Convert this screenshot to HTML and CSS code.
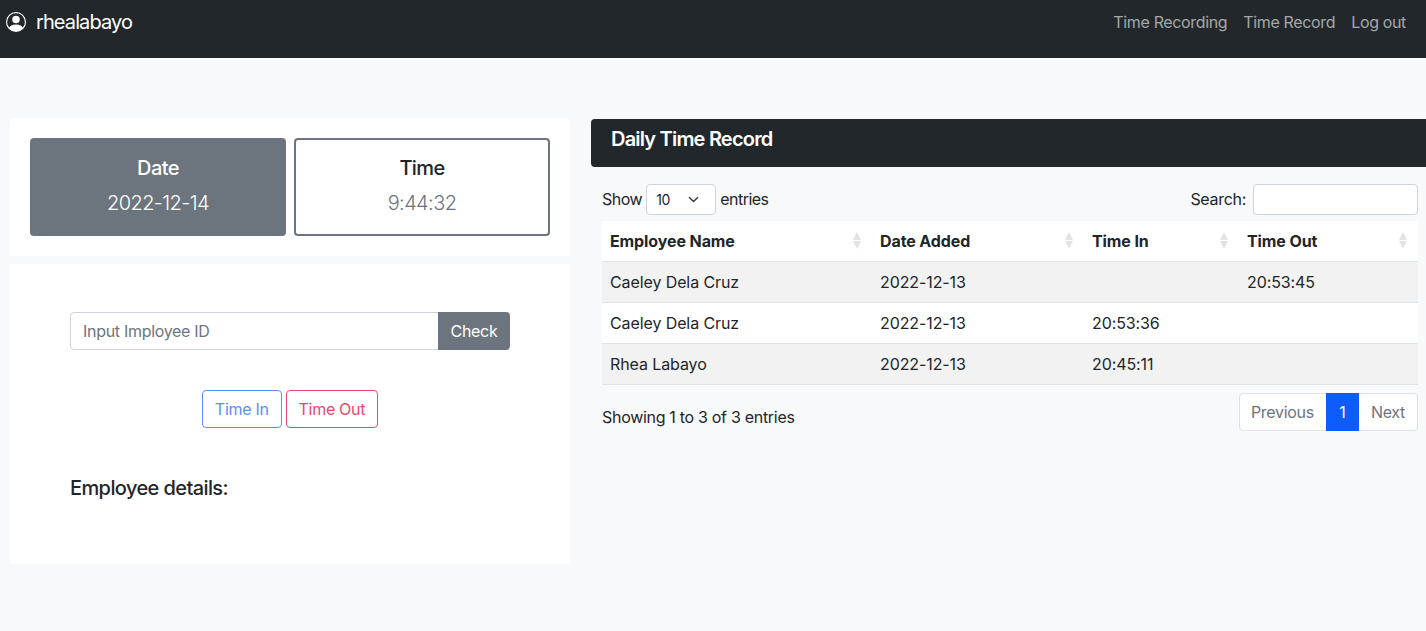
FILE: index.html
```html
<!DOCTYPE html>
<html lang="en">
<head>
  <meta charset="UTF-8">
  <meta name="viewport" content="width=device-width, initial-scale=1.0">
  <title>Daily Time Record</title>
  <link rel="stylesheet" href="styles.css">
</head>
<body>
  <nav class="navbar">
    <a class="brand" href="#">
      <svg class="brand-icon" viewBox="0 0 16 16" fill="currentColor">
        <path d="M11 6a3 3 0 1 1-6 0 3 3 0 0 1 6 0z"/>
        <path fill-rule="evenodd" d="M0 8a8 8 0 1 1 16 0A8 8 0 0 1 0 8zm8-7a7 7 0 0 0-5.468 11.37C3.242 11.226 4.805 10 8 10s4.757 1.225 5.468 2.37A7 7 0 0 0 8 1z"/>
      </svg>
      rhealabayo
    </a>
    <div class="nav-links">
      <a href="#">Time Recording</a>
      <a href="#">Time Record</a>
      <a href="#">Log out</a>
    </div>
  </nav>

  <main class="content">
    <section class="left-col">
      <div class="panel clock-panel">
        <div class="clock-box clock-date">
          <h5>Date</h5>
          <p>2022-12-14</p>
        </div>
        <div class="clock-box clock-time">
          <h5>Time</h5>
          <p>9:44:32</p>
        </div>
      </div>

      <div class="panel check-panel">
        <div class="input-group">
          <input class="id-input" type="text" placeholder="Input Imployee ID">
          <button class="btn-check">Check</button>
        </div>
        <div class="time-buttons">
          <button class="btn-outline btn-in">Time In</button>
          <button class="btn-outline btn-out">Time Out</button>
        </div>
        <h5 class="details-title">Employee details:</h5>
      </div>
    </section>

    <section class="right-col">
      <div class="record-header">Daily Time Record</div>
      <div class="record-body">
        <div class="table-tools">
          <label class="length-label">
            Show
            <span class="fake-select">10
              <svg class="chevron" viewBox="0 0 16 16"><path d="M2 5l6 6 6-6" fill="none" stroke="#343a40" stroke-width="2" stroke-linecap="round" stroke-linejoin="round"/></svg>
            </span>
            entries
          </label>
          <label class="search-label">Search: <input class="search-input" type="text"></label>
        </div>

        <table class="record-table">
          <colgroup>
            <col class="col-name">
            <col class="col-date">
            <col class="col-in">
            <col class="col-out">
          </colgroup>
          <thead>
            <tr>
              <th>Employee Name</th>
              <th>Date Added</th>
              <th>Time In</th>
              <th>Time Out</th>
            </tr>
          </thead>
          <tbody>
            <tr class="odd">
              <td>Caeley Dela Cruz</td>
              <td>2022-12-13</td>
              <td></td>
              <td>20:53:45</td>
            </tr>
            <tr>
              <td>Caeley Dela Cruz</td>
              <td>2022-12-13</td>
              <td>20:53:36</td>
              <td></td>
            </tr>
            <tr class="odd">
              <td>Rhea Labayo</td>
              <td>2022-12-13</td>
              <td>20:45:11</td>
              <td></td>
            </tr>
          </tbody>
        </table>

        <div class="table-foot">
          <span class="table-info">Showing 1 to 3 of 3 entries</span>
          <ul class="pagination">
            <li>Previous</li>
            <li class="active">1</li>
            <li>Next</li>
          </ul>
        </div>
      </div>
    </section>
  </main>
</body>
</html>
```

FILE: styles.css
```css
* {
  box-sizing: border-box;
}

body {
  margin: 0;
  background: #f8f9fa;
  color: #212529;
  font-family: Inter, "Liberation Sans", sans-serif;
  font-size: 16px;
  line-height: 24px;
  letter-spacing: -.3px;
}

h5 {
  margin: 0;
  font-size: 20px;
  font-weight: 500;
  line-height: 24px;
  letter-spacing: -.6px;
}

p {
  margin: 0;
}

a {
  text-decoration: none;
}

.navbar {
  display: flex;
  justify-content: space-between;
  height: 58px;
  padding: 7px 20px 0 6px;
  background: #21272b;
}

.brand {
  display: flex;
  align-items: center;
  gap: 10px;
  height: 30px;
  color: #fff;
  font-size: 20px;
  letter-spacing: -.9px;
}

.brand-icon {
  width: 20px;
  height: 20px;
}

.nav-links {
  display: flex;
  gap: 16px;
  height: 30px;
  align-items: center;
  letter-spacing: -.35px;
}

.nav-links a {
  color: rgba(255, 255, 255, .6);
}

.content {
  display: flex;
  gap: 21px;
  padding: 60px 0 0 10px;
}

.left-col {
  display: flex;
  flex-direction: column;
  gap: 8px;
  flex: none;
  width: 560px;
}

.panel {
  background: #fff;
  border-radius: 4px 4px 0 0;
}

.clock-panel {
  display: flex;
  gap: 8px;
  height: 138px;
  padding: 20px;
}

.clock-box {
  flex: 1;
  padding-top: 16px;
  border: 2px solid #6c757d;
  border-radius: 4px;
  text-align: center;
}

.clock-box p {
  margin-top: 11px;
  font-size: 20px;
  font-weight: 300;
  letter-spacing: -.6px;
}

.clock-date {
  background: #6c757d;
  color: #fff;
}

.clock-time p {
  color: #6c757d;
}

.check-panel {
  height: 300px;
  padding: 48px 60px 0;
  border-radius: 0;
}

.input-group {
  display: flex;
  height: 38px;
}

.id-input {
  flex: 1;
  min-width: 0;
  padding: 6px 12px;
  border: 1px solid #ced4da;
  border-radius: 4px 0 0 4px;
  font: inherit;
  letter-spacing: inherit;
}

.id-input::placeholder {
  color: #6c757d;
}

.btn-check {
  width: 72px;
  margin-left: -1px;
  border: 0;
  border-radius: 0 4px 4px 0;
  background: #6c757d;
  color: #fff;
  font: inherit;
  letter-spacing: inherit;
}

.time-buttons {
  display: flex;
  justify-content: center;
  gap: 4px;
  margin-top: 40px;
}

.btn-outline {
  height: 38px;
  padding: 0 12px;
  border: 1px solid;
  border-radius: 4px;
  background: #fff;
  font: inherit;
  letter-spacing: inherit;
}

.btn-in {
  border-color: #5c8ffc;
  color: #5c8ffc;
}

.btn-out {
  border-color: #e9486d;
  color: #e9486d;
}

.details-title {
  margin-top: 48px;
}

.right-col {
  flex: 1;
  min-width: 0;
  padding-top: 1px;
}

.record-header {
  height: 48px;
  padding: 8px 20px;
  border-radius: 4px 0 0 4px;
  background: #21272b;
  color: #fff;
  font-size: 20px;
  font-weight: 600;
  letter-spacing: -.8px;
}

.record-body {
  padding: 17px 8px 0 11px;
}

.table-tools {
  display: flex;
  justify-content: space-between;
  align-items: center;
  height: 31px;
  margin-bottom: 6px;
}

.length-label {
  display: flex;
  align-items: center;
  gap: 4px;
  margin-top: -1px;
  letter-spacing: -.5px;
}

.fake-select {
  display: flex;
  justify-content: space-between;
  align-items: center;
  width: 70px;
  height: 31px;
  margin-top: 1px;
  padding: 0 16px 0 9px;
  border: 1px solid #ced4da;
  border-radius: 4px;
  background: #fff;
  font-size: 14px;
  letter-spacing: -.3px;
}

.chevron {
  width: 11px;
  height: 11px;
}

.search-label {
  display: flex;
  align-items: center;
  gap: 7px;
  margin-top: -1px;
}

.search-input {
  width: 165px;
  height: 31px;
  margin-top: 1px;
  border: 1px solid #ced4da;
  border-radius: 4px;
  background: #fff;
}

.record-table {
  width: 100%;
  border-collapse: collapse;
  table-layout: fixed;
  background: #fff;
  letter-spacing: -.1px;
}

.col-name {
  width: 270px;
}

.col-date {
  width: 212px;
}

.col-in {
  width: 155px;
}

.record-table th,
.record-table td {
  height: 41px;
  padding: 8px;
  border-bottom: 1px solid #dee2e6;
  text-align: left;
}

.record-table th {
  position: relative;
  height: 40px;
  font-weight: 700;
}

/* sort arrows */
.record-table th::before,
.record-table th::after {
  content: "";
  position: absolute;
  right: 11px;
  border-left: 4px solid transparent;
  border-right: 4px solid transparent;
}

.record-table th::before {
  top: 11px;
  border-bottom: 8px solid #e1e3e5;
}

.record-table th::after {
  top: 20px;
  border-top: 8px solid #e1e3e5;
}

.record-table tr.odd td {
  background: #f2f2f2;
}

.table-foot {
  display: flex;
  justify-content: space-between;
  align-items: center;
  margin-top: 8px;
}

.table-info {
  padding-top: 10px;
}

.pagination {
  display: flex;
  height: 38px;
  margin: 0;
  padding: 0;
  list-style: none;
  border: 1px solid #dee2e6;
  border-radius: 4px;
  background: #fff;
  color: #6c757d;
}

.pagination li {
  padding: 6px 12px;
  line-height: 24px;
}

.pagination li:first-child {
  padding-left: 11px;
}

.pagination li.active {
  width: 33px;
  margin: -1px 0;
  padding: 7px 0;
  background: #0d5cfd;
  color: #fff;
  text-align: center;
}
```
